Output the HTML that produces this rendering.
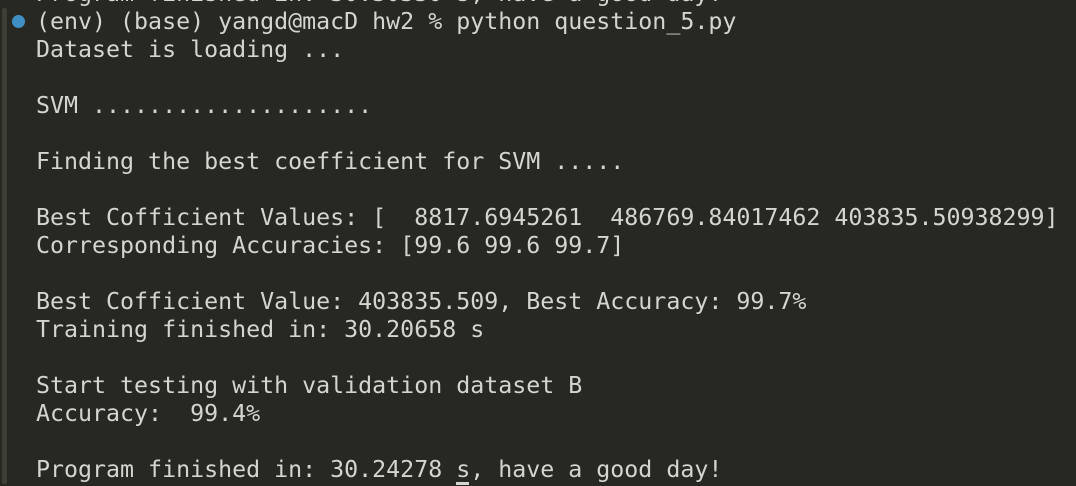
<!DOCTYPE html>
<html><head><style>
html,body{margin:0;padding:0;background:#272822;width:1076px;height:486px;overflow:hidden}
.bar{position:absolute;left:2px;top:8px;width:5px;height:476px;background:#3d3e36;border-radius:2px}
.dot{position:absolute;left:12px;top:15px;width:13px;height:13px;border-radius:50%;background:#3f8fc5}
pre{position:absolute;left:36px;top:-20px;margin:0;font-family:"DejaVu Sans Mono","Liberation Mono",monospace;font-size:23.28px;line-height:28px;color:#d4d4d0;white-space:pre}
.cur{position:absolute;left:456px;top:482px;width:13px;height:3px;background:#d4d4d0}
</style></head><body>
<div class="bar"></div><div class="dot"></div>
<pre>Program finished in: 30.30330 s, have a good day!
(env) (base) yangd@macD hw2 % python question_5.py
Dataset is loading ...

SVM ....................

Finding the best coefficient for SVM .....

Best Cofficient Values: [  8817.6945261  486769.84017462 403835.50938299]
Corresponding Accuracies: [99.6 99.6 99.7]

Best Cofficient Value: 403835.509, Best Accuracy: 99.7%
Training finished in: 30.20658 s

Start testing with validation dataset B
Accuracy:  99.4%

Program finished in: 30.24278 s, have a good day!</pre>
<div class="cur"></div>
</body></html>
